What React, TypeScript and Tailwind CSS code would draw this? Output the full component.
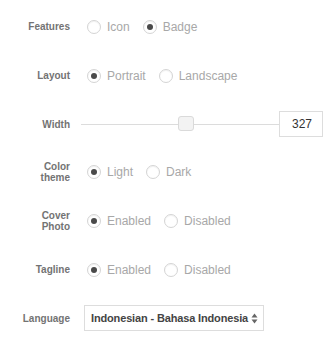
import { useState } from "react"

type RadioRowProps = {
  label: React.ReactNode
  options: string[]
  value: string
  onChange: (v: string) => void
  h: string
}

function Radio({ checked }: { checked: boolean }) {
  return (
    <span className="w-[14px] h-[14px] rounded-full border border-[#d4d4d4] bg-white shadow-[inset_0_1px_1px_rgba(0,0,0,0.06)] flex items-center justify-center shrink-0">
      {checked && <span className="w-[6px] h-[6px] rounded-full bg-[#4a4a4a]" />}
    </span>
  )
}

function Label({ children }: { children: React.ReactNode }) {
  return (
    <div className="w-[70px] shrink-0 text-right text-[10px] font-bold leading-[11px] text-[#737373]">
      {children}
    </div>
  )
}

function RadioRow({ label, options, value, onChange, h }: RadioRowProps) {
  return (
    <div className={`flex items-center ${h}`}>
      <Label>{label}</Label>
      <div className="flex items-center gap-[13px] pl-[17px]">
        {options.map((opt) => (
          <button
            key={opt}
            type="button"
            onClick={() => onChange(opt)}
            className="flex items-center gap-[6px] text-[12px] text-[#a8a8a8]"
          >
            <Radio checked={value === opt} />
            <span>{opt}</span>
          </button>
        ))}
      </div>
    </div>
  )
}

export default function App() {
  const [features, setFeatures] = useState("Badge")
  const [layout, setLayout] = useState("Portrait")
  const [theme, setTheme] = useState("Light")
  const [cover, setCover] = useState("Enabled")
  const [tagline, setTagline] = useState("Enabled")
  const [width, setWidth] = useState(327)

  return (
    <div
      className="w-[336px] h-[350px] bg-white pt-[2px] flex flex-col"
      style={{ fontFamily: '"Liberation Sans", Arial, sans-serif' }}
    >
      <RadioRow h="h-[49px]" label="Features" options={["Icon", "Badge"]} value={features} onChange={setFeatures} />
      <RadioRow h="h-[49px]" label="Layout" options={["Portrait", "Landscape"]} value={layout} onChange={setLayout} />

      {/* Width slider */}
      <div className="flex items-center h-[48px]">
        <Label>Width</Label>
        <div className="flex items-center pl-[11px]">
          <div className="relative w-[198px] h-[16px] flex items-center">
            <div className="w-full h-px bg-[#dcdcdc]" />
            <div className="absolute left-[97px] top-0 w-[16px] h-[15px] rounded-[3px] border border-[#dadada] bg-[#f3f3f3]" />
          </div>
          <input
            value={width}
            onChange={(e) => setWidth(Number(e.target.value) || 0)}
            className="w-[44px] h-[26px] border border-[#ddd] text-right pr-[10px] text-[12px] text-[#333] outline-none"
          />
        </div>
      </div>

      <RadioRow
        h="h-[48px]"
        label={<>Color<br />theme</>}
        options={["Light", "Dark"]}
        value={theme}
        onChange={setTheme}
      />
      <RadioRow
        h="h-[49px]"
        label={<>Cover<br />Photo</>}
        options={["Enabled", "Disabled"]}
        value={cover}
        onChange={setCover}
      />
      <RadioRow h="h-[49px]" label="Tagline" options={["Enabled", "Disabled"]} value={tagline} onChange={setTagline} />

      {/* Language */}
      <div className="flex items-center h-[48px]">
        <Label>Language</Label>
        <div className="pl-[14px]">
          <div className="w-[180px] h-[26px] border border-[#ddd] flex items-center pl-[6px] pr-[5px] justify-between">
            <span className="text-[11px] font-bold text-[#444] tracking-[-0.15px]">Indonesian - Bahasa Indonesia</span>
            <svg width="7" height="11" viewBox="0 0 7 11">
              <path d="M3.5 0.5 L6.5 4.5 H0.5 Z" fill="#666" />
              <path d="M3.5 10.5 L6.5 6.5 H0.5 Z" fill="#666" />
            </svg>
          </div>
        </div>
      </div>
    </div>
  )
}
